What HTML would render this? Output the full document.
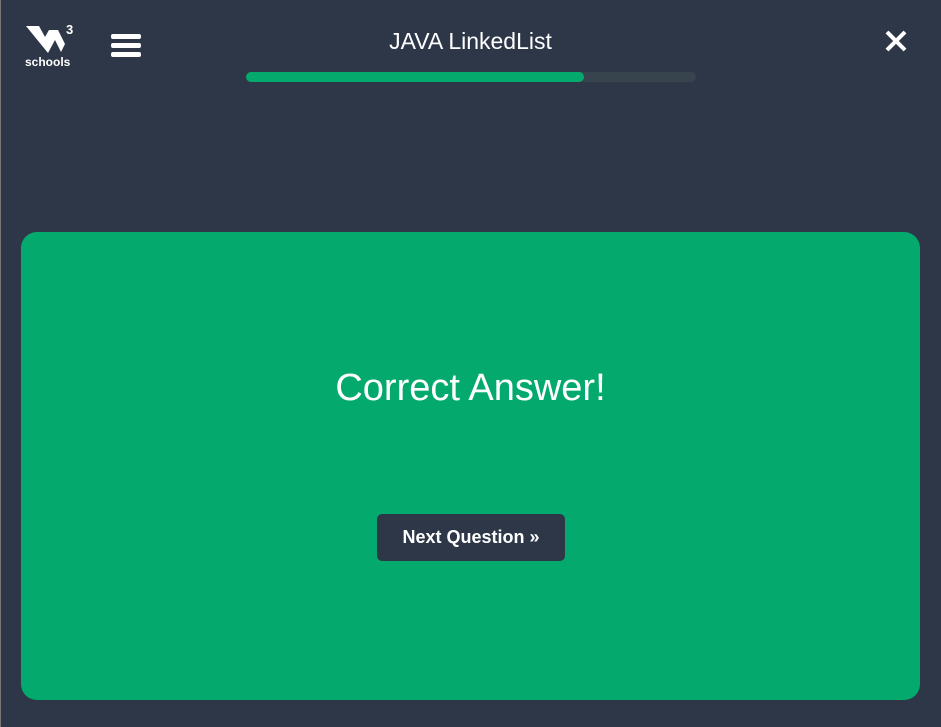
<!DOCTYPE html>
<html><head><style>
body{margin:0;width:941px;height:727px;background:#2d3748;position:relative;overflow:hidden;font-family:"Liberation Sans",sans-serif;color:#fff}
.lb{position:absolute;left:0;top:0;width:1px;height:727px;background:#777}
.title{position:absolute;left:0;width:941px;top:28px;text-align:center;font-size:23px}
.bar{position:absolute;left:246px;top:72px;width:450px;height:10px;border-radius:5px;background:#38444d}
.fill{width:338px;height:10px;border-radius:5px;background:#04aa6d}
.card{position:absolute;left:21px;top:232px;width:899px;height:468px;background:#04aa6d;border-radius:16px}
.ca{position:absolute;left:0;width:899px;top:135px;text-align:center;font-size:38px}
.btn{position:absolute;left:356px;top:282px;width:188px;height:47px;background:#2d3748;border-radius:5px;font-weight:bold;font-size:18px;text-align:center;line-height:47px}
.hb{position:absolute;left:111px;width:30px;height:5px;background:#fff;border-radius:2px}
</style></head><body>
<div class="lb"></div>
<svg style="position:absolute;left:24px;top:22px" width="54" height="48" viewBox="0 0 54 48">
<path d="M2 4 L15 4 L21 15 L25 8 L34 8 L41 22 L37 30 L31 18 L24 31 Z" fill="#fff"/>
<text x="42" y="12" font-size="13" font-family="Liberation Sans" font-weight="bold" fill="#fff">3</text>
<text x="1" y="44" font-size="12" font-family="Liberation Sans" font-weight="bold" fill="#fff">schools</text>
</svg>
<div class="hb" style="top:34px"></div><div class="hb" style="top:43px"></div><div class="hb" style="top:52px"></div>
<div class="title">JAVA LinkedList</div>
<div class="bar"><div class="fill"></div></div>
<svg style="position:absolute;left:884px;top:29px" width="24" height="24"><path d="M3 3L21 21M21 3L3 21" stroke="#fff" stroke-width="4"/></svg>
<div class="card"><div class="ca">Correct Answer!</div><div class="btn">Next Question »</div></div>
</body></html>
